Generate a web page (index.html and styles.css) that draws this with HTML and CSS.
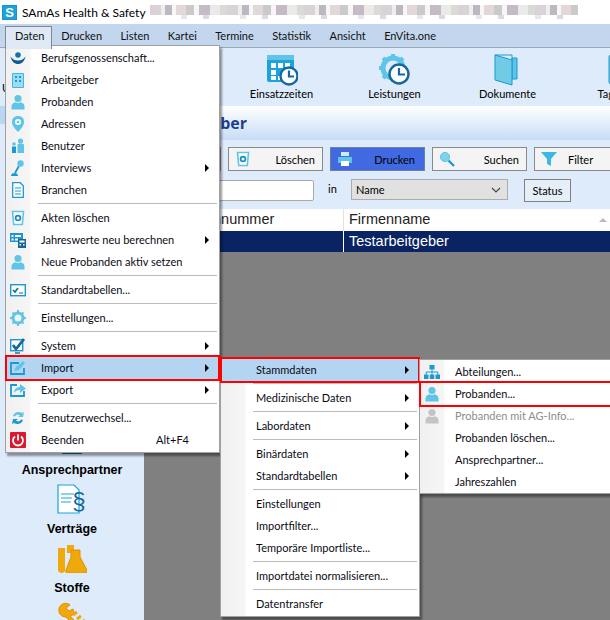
FILE: index.html
```html
<!DOCTYPE html>
<html lang="de">
<head>
  <meta charset="UTF-8">
  <title>SAmAs Health &amp; Safety</title>
  <link rel="stylesheet" href="styles.css">
</head>
<body>

<svg class="defs" width="0" height="0">
  <symbol id="i-person" viewBox="0 0 16 16">
    <circle cx="8" cy="4.500" r="3.600"/>
    <path d="M1.500 15.500v-3c0-2.600 2-3.800 4-4.200 1.400.8 3.600.8 5 0 2 .4 4 1.600 4 4.200v3z"/>
  </symbol>
  <symbol id="i-trash" viewBox="0 0 16 16">
    <path d="M2.500 1.500h11l-1.200 13H3.700z" fill="#fff" stroke="#5ec5e8" stroke-width="1.600"/>
    <circle cx="8" cy="8" r="2.400" fill="none" stroke="#1a8fc4" stroke-width="1.800"/>
  </symbol>
</svg>

<div class="titlebar">
  <span class="app-logo">S</span>
  <span class="app-title">SAmAs Health &amp; Safety</span>
  <span class="blur-strip"></span>
</div>

<nav class="menubar">
  <span class="menubar-item is-open">Daten</span>
  <span class="menubar-item">Drucken</span>
  <span class="menubar-item">Listen</span>
  <span class="menubar-item">Kartei</span>
  <span class="menubar-item">Termine</span>
  <span class="menubar-item">Statistik</span>
  <span class="menubar-item">Ansicht</span>
  <span class="menubar-item">EnVita.one</span>
</nav>

<div class="toolbar">
  <div class="tool tool-first">U</div>
  <div class="tool">
    <svg class="tool-icon" viewBox="0 0 32 32">
      <rect x="1" y="1" width="27" height="27" rx="2" fill="#1ba3dc"/>
      <rect x="1" y="1" width="27" height="5" fill="#5ec5e8"/>
      <path d="M5 9h5v5H5zM12 9h5v5h-5zM19 9h5v5h-5zM5 16h5v5H5zM5 22h5v4H5zM12 22h4v4h-4z" fill="#fff"/>
      <circle cx="23" cy="22" r="8.500" fill="#fff" stroke="#14689c" stroke-width="2.400"/>
      <path d="M23 16.500v6h5" fill="none" stroke="#14689c" stroke-width="2.200"/>
    </svg>
    <span>Einsatzzeiten</span>
  </div>
  <div class="tool">
    <svg class="tool-icon" viewBox="0 0 32 32">
      <circle cx="14" cy="14" r="10" fill="none" stroke="#5ec5e8" stroke-width="5"/>
      <path d="M14 0v6M14 22v6M0 14h6M22 14h6M4 4l4 4M20 20l4 4M24 4l-4 4M8 20l-4 4" stroke="#5ec5e8" stroke-width="4"/>
      <circle cx="20" cy="20" r="9.500" fill="#fff" stroke="#14689c" stroke-width="2.400"/>
      <path d="M20 14v6.500h6" fill="none" stroke="#14689c" stroke-width="2.200"/>
    </svg>
    <span>Leistungen</span>
  </div>
  <div class="tool">
    <svg class="tool-icon" viewBox="0 0 32 32">
      <path d="M20 4h5v21h-5z" fill="#5ec5e8" stroke="#1a9ad0"/>
      <path d="M3 1l17 5v25L3 26z" fill="#6fcbe6" stroke="#1a9ad0"/>
      <path d="M3 1h17v5" fill="none" stroke="#1a9ad0"/>
    </svg>
    <span>Dokumente</span>
  </div>
  <div class="tool">
    <svg class="tool-icon" viewBox="0 0 32 32">
      <rect x="4" y="1" width="24" height="29" rx="2" fill="#6fcbe6" stroke="#1a9ad0"/>
    </svg>
    <span>Tagebuch</span>
  </div>
</div>

<div class="main">
  <aside class="sidebar">
    <div class="side-tab"></div>
    <div class="side-item">
      <svg class="side-icon" viewBox="0 0 30 30">
        <path d="M5 26h20v3H5z" fill="#14689c"/>
      </svg>
      <span class="side-label">Ansprechpartner</span>
    </div>
    <div class="side-item">
      <svg class="side-icon" viewBox="0 0 30 30">
        <path d="M1 1h16l5 5v23H1z" fill="#fff" stroke="#1aa3dd" stroke-width="1.200"/>
        <path d="M4 10h13M4 14h11M4 18h10" stroke="#1aa3dd" stroke-width="1.200"/>
        <text x="22" y="25" class="para-sign">§</text>
      </svg>
      <span class="side-label">Verträge</span>
    </div>
    <div class="side-item">
      <svg class="side-icon" viewBox="0 0 30 30">
        <path d="M1 5h7v22c0 4-7 4-7 0z" fill="#f0a90a"/>
        <path d="M10 2h7v8h-7z" fill="#f0a90a"/>
        <path d="M14 7h9v7l7 13c1 2 0 3-2 3H11c-2 0-3-1-2-3l5-13z" fill="#f0a90a" stroke="#e0900a"/>
      </svg>
      <span class="side-label">Stoffe</span>
    </div>
    <div class="side-item">
      <svg class="side-icon" viewBox="0 0 30 30">
        <path d="M2 6c2-5 8-6 11-3L9 6l3 3 4-2c2 4 0 7-3 7l12 12-3 3L9 15C4 15 1 11 2 6z" fill="#f0a90a" stroke="#e0900a"/>
        <path d="M16 13l4-3M20 17l4-3M24 21l4-3" stroke="#f0a90a" stroke-width="3"/>
      </svg>
    </div>
  </aside>

  <section class="content">
    <h1 class="page-head">Arbeitgeber</h1>
    <div class="actions">
      <button class="act-btn act-hidden"></button>
      <button class="act-btn">
        <svg class="act-icon"><use href="#i-trash"/></svg><span class="act-text">Löschen</span>
      </button>
      <button class="act-btn is-active">
        <svg class="act-icon" viewBox="0 0 16 16">
          <path d="M4 1h8v4H4z" fill="#cdeaf6"/>
          <path d="M1 6h14v6H1z" fill="#5ec5e8"/>
          <path d="M4 10h8v5H4z" fill="#fff"/>
        </svg><span class="act-text">Drucken</span>
      </button>
      <button class="act-btn">
        <svg class="act-icon" viewBox="0 0 16 16">
          <circle cx="6" cy="6" r="4.600" fill="#7fd2ee" stroke="#5ec5e8"/>
          <path d="M9.500 9.500l5.500 5.500" stroke="#1a9ad0" stroke-width="2.400"/>
        </svg><span class="act-text">Suchen</span>
      </button>
      <button class="act-btn act-filter">
        <svg class="act-icon" viewBox="0 0 16 16">
          <path d="M0 1h16l-6 7v7l-4-2V8z" fill="#3db8e4"/>
        </svg><span class="act-text">Filter</span>
      </button>
    </div>
    <div class="filter-row">
      <input class="filter-input" type="text">
      <span class="filter-in">in</span>
      <div class="filter-select">
        <span>Name</span>
        <svg class="chevron" viewBox="0 0 10 6"><path d="M1 1l4 4 4-4" fill="none" stroke="#444" stroke-width="1.100"/></svg>
      </div>
      <button class="status-btn">Status</button>
    </div>
    <div class="grid-row grid-head">
      <div class="cell cell-nr">Firmennummer</div>
      <div class="cell cell-name">Firmenname<span class="sort-mark"></span></div>
    </div>
    <div class="grid-row grid-sel">
      <div class="cell cell-nr"></div>
      <div class="cell cell-name">Testarbeitgeber</div>
    </div>
    <div class="grid-empty"></div>
  </section>
</div>

<!-- Daten menu -->
<div class="menu menu-daten">
  <div class="menu-item">
    <svg class="menu-icon" viewBox="0 0 16 16">
      <circle cx="8" cy="5" r="2.800" fill="#1673a8"/>
      <path d="M.500 6.500c1 5 4 7.500 7.500 7.500s6.500-2.500 7.500-7.500c-2 2.500-4 4-7.500 4S2.500 9 .5 6.500z" fill="#0f5f94"/>
    </svg>
    <span>Berufsgenossenschaft...</span>
  </div>
  <div class="menu-item">
    <svg class="menu-icon" viewBox="0 0 16 16">
      <path d="M2.500 1.500h11v14h-11z" fill="#9bdcf0" stroke="#3db8e4"/>
      <path d="M5 4h2v2H5zM9 4h2v2H9zM5 8h2v2H5zM9 8h2v2H9z" fill="#1a9ad0"/>
    </svg>
    <span>Arbeitgeber</span>
  </div>
  <div class="menu-item">
    <svg class="menu-icon icon-person"><use href="#i-person"/></svg>
    <span>Probanden</span>
  </div>
  <div class="menu-item">
    <svg class="menu-icon" viewBox="0 0 16 16">
      <path d="M8 0c4 0 6 2.500 6 6 0 3.500-3 7-6 10C5 13 2 9.500 2 6c0-3.500 2-6 6-6z" fill="#5ec5e8"/>
      <circle cx="8" cy="6" r="3" fill="#fff"/>
      <circle cx="8" cy="6" r="1.300" fill="#5ec5e8"/>
    </svg>
    <span>Adressen</span>
  </div>
  <div class="menu-item">
    <svg class="menu-icon" viewBox="0 0 16 16">
      <circle cx="4" cy="6" r="1.800" fill="#5ec5e8"/>
      <path d="M2 8.500h4V15H2z" fill="#1a9ad0"/>
      <circle cx="10.500" cy="3" r="2.600" fill="#5ec5e8"/>
      <path d="M7.500 7c0-1 1-1.500 3-1.500s3.500.5 3.500 1.500v8H7.500z" fill="#5ec5e8"/>
    </svg>
    <span>Benutzer</span>
  </div>
  <div class="menu-item has-sub">
    <svg class="menu-icon" viewBox="0 0 16 16">
      <path d="M9 6l-4 7" stroke="#1a9ad0" stroke-width="1.800"/>
      <circle cx="10.500" cy="3.500" r="3.200" fill="#5ec5e8"/>
      <path d="M1 16c0-2 1.500-3 3.500-3s3.500 1 3.500 3z" fill="#1a9ad0"/>
    </svg>
    <span>Interviews</span>
  </div>
  <div class="menu-item">
    <svg class="menu-icon" viewBox="0 0 16 16">
      <path d="M2.700.7h7.500l3.100 3.100v11.500H2.700z" fill="#fff" stroke="#1a9ad0" stroke-width="1.300"/>
      <path d="M5 6h6M5 9h6M5 12h6" stroke="#1a9ad0" stroke-width="1.100"/>
    </svg>
    <span>Branchen</span>
  </div>
  <div class="menu-sep"></div>
  <div class="menu-item">
    <svg class="menu-icon"><use href="#i-trash"/></svg>
    <span>Akten löschen</span>
  </div>
  <div class="menu-item has-sub">
    <svg class="menu-icon" viewBox="0 0 16 16">
      <path d="M0 1h13v9H0z" fill="#1a9ad0"/>
      <path d="M1.500 3h2v2h-2zM5 3h6v2H5zM1.500 6.500h2v2h-2zM5 6.500h3v2H5z" fill="#fff"/>
      <path d="M8 7h8v9H8z" fill="#14689c"/>
      <path d="M9.500 8.500h5v2h-5zM9.500 12H11v1.500H9.500zM13 12h1.500v1.500H13z" fill="#fff"/>
    </svg>
    <span>Jahreswerte neu berechnen</span>
  </div>
  <div class="menu-item">
    <svg class="menu-icon icon-person"><use href="#i-person"/></svg>
    <span>Neue Probanden aktiv setzen</span>
  </div>
  <div class="menu-sep"></div>
  <div class="menu-item">
    <svg class="menu-icon" viewBox="0 0 16 16">
      <rect x=".7" y="2.700" width="14.600" height="11" fill="#fff" stroke="#1a9ad0" stroke-width="1.400"/>
      <path d="M3 8l2 2 3-4" fill="none" stroke="#14689c" stroke-width="1.600"/>
      <path d="M9 11h4" stroke="#14689c"/>
    </svg>
    <span>Standardtabellen...</span>
  </div>
  <div class="menu-sep"></div>
  <div class="menu-item">
    <svg class="menu-icon" viewBox="0 0 16 16">
      <circle cx="8" cy="8" r="5" fill="none" stroke="#5ec5e8" stroke-width="3"/>
      <path d="M8 0v3M8 13v3M0 8h3M13 8h3M2.500 2.500l2 2M11.500 11.500l2 2M13.500 2.500l-2 2M4.500 11.500l-2 2" stroke="#5ec5e8" stroke-width="2"/>
    </svg>
    <span>Einstellungen...</span>
  </div>
  <div class="menu-sep"></div>
  <div class="menu-item has-sub">
    <svg class="menu-icon" viewBox="0 0 16 16">
      <rect x=".7" y="1.700" width="12" height="11" fill="#fff" stroke="#1a9ad0" stroke-width="1.400"/>
      <path d="M3 7l3 4 8-10" fill="none" stroke="#14689c" stroke-width="2.800"/>
      <path d="M5 15h5" stroke="#14689c" stroke-width="1.400"/>
    </svg>
    <span>System</span>
  </div>
  <div class="menu-item has-sub is-hot is-marked">
    <svg class="menu-icon" viewBox="0 0 16 16">
      <path d="M9 3H1v11h13V8" fill="none" stroke="#1a9ad0" stroke-width="1.800"/>
      <path d="M4 11l2-4 7-6 2 2-6 7z" fill="#5ec5e8"/>
    </svg>
    <span>Import</span>
  </div>
  <div class="menu-item has-sub">
    <svg class="menu-icon" viewBox="0 0 16 16">
      <path d="M7 3H1v11h13V9" fill="none" stroke="#1a9ad0" stroke-width="1.800"/>
      <path d="M4 11c0-4 3-6 6-6V2l6 4.500L10 11V8c-3 0-5 1-6 3z" fill="#5ec5e8"/>
    </svg>
    <span>Export</span>
  </div>
  <div class="menu-sep"></div>
  <div class="menu-item">
    <svg class="menu-icon" viewBox="0 0 16 16">
      <path d="M3 6c1-4 6-5 9-3l2-1-1 5H8l2-1.500C8 4 6 4.500 5 6.500z" fill="#5ec5e8"/>
      <path d="M13 10c-1 4-6 5-9 3l-2 1 1-5h5l-2 1.500c2 1.500 4 1 5-1z" fill="#1a9ad0"/>
    </svg>
    <span>Benutzerwechsel...</span>
  </div>
  <div class="menu-item">
    <svg class="menu-icon" viewBox="0 0 16 16">
      <rect width="16" height="16" rx="1" fill="#d8192f"/>
      <path d="M5 4.500a5 5 0 1 0 6 0" fill="none" stroke="#fff" stroke-width="1.800"/>
      <path d="M8 2.500v6" stroke="#fff" stroke-width="1.800"/>
    </svg>
    <span>Beenden</span>
    <span class="menu-key">Alt+F4</span>
  </div>
</div>

<!-- Import submenu -->
<div class="menu menu-import">
  <div class="menu-item has-sub is-hot is-marked"><span>Stammdaten</span></div>
  <div class="menu-sep"></div>
  <div class="menu-item has-sub"><span>Medizinische Daten</span></div>
  <div class="menu-sep"></div>
  <div class="menu-item has-sub"><span>Labordaten</span></div>
  <div class="menu-sep"></div>
  <div class="menu-item has-sub"><span>Binärdaten</span></div>
  <div class="menu-item has-sub"><span>Standardtabellen</span></div>
  <div class="menu-sep"></div>
  <div class="menu-item"><span>Einstellungen</span></div>
  <div class="menu-item"><span>Importfilter...</span></div>
  <div class="menu-item"><span>Temporäre Importliste...</span></div>
  <div class="menu-sep"></div>
  <div class="menu-item"><span>Importdatei normalisieren...</span></div>
  <div class="menu-sep"></div>
  <div class="menu-item"><span>Datentransfer</span></div>
</div>

<!-- Stammdaten submenu -->
<div class="menu menu-stamm">
  <div class="menu-item">
    <svg class="menu-icon" viewBox="0 0 16 16">
      <path d="M5.500 1h5v4.500h-5zM0 10.500h4.500V15H0zM5.750 10.500h4.500V15h-4.500zM11.500 10.500H16V15h-4.500z" fill="#1a9ad0"/>
      <path d="M8 5.500v5M2.200 10.500V8h11.600v2.500" fill="none" stroke="#1a9ad0"/>
    </svg>
    <span>Abteilungen...</span>
  </div>
  <div class="menu-item is-marked">
    <svg class="menu-icon icon-person"><use href="#i-person"/></svg>
    <span>Probanden...</span>
  </div>
  <div class="menu-item is-disabled">
    <svg class="menu-icon icon-person-off"><use href="#i-person"/></svg>
    <span>Probanden mit AG-Info...</span>
  </div>
  <div class="menu-item"><span>Probanden löschen...</span></div>
  <div class="menu-item"><span>Ansprechpartner...</span></div>
  <div class="menu-item"><span>Jahreszahlen</span></div>
</div>

</body>
</html>
```
FILE: styles.css
```css
* {
  box-sizing: border-box;
}

html, body {
  margin: 0;
  height: 620px;
  overflow: hidden;
}

body {
  position: relative;
  width: 610px;
  background: #fff;
  font-family: Lato, "Noto Sans", sans-serif;
  font-size: 11px;
  color: #000;
}

.defs {
  position: absolute;
}

/* title bar */
.titlebar {
  display: flex;
  align-items: center;
  height: 24px;
  padding-left: 2px;
  background: #fff;
}

.app-logo {
  width: 15px;
  height: 15px;
  border: 1px solid #1592cf;
  background: #1ba3dc;
  color: #fff;
  font: bold 13px/13px "Liberation Sans", sans-serif;
  text-align: center;
}

.app-title {
  margin-left: 5px;
  font-size: 12px;
}

.blur-strip {
  width: 428px;
  height: 14px;
  margin-left: 4px;
  filter: blur(0.6px);
  opacity: 0.7;
  background-image:
    repeating-linear-gradient(90deg, #c9bfc5 0 11px, #e8e8e4 11px 15px, #a09aa7 15px 22px, #f4f4f4 22px 26px, #d6c8c8 26px 36px, #b5b5b5 36px 44px, #f4f2f2 44px 49px, #ac9faf 49px 60px, #e4e0e0 60px 70px, #ccccc4 70px 77px),
    repeating-linear-gradient(90deg, #fff 0 31px, #ddd 31px 37px, #fff 37px 53px, #ccc 53px 59px);
  background-size: 100% 10px, 100% 14px;
  background-repeat: no-repeat;
}

/* menu bar */
.menubar {
  display: flex;
  height: 24px;
  padding: 2px 0 0 5px;
  background: #c2d7ee;
  border-bottom: 1px solid #9da8b5;
}

.menubar-item {
  padding: 3px 9.200px 0;
  color: #111;
  white-space: nowrap;
}

.menubar-item.is-open {
  width: 47px;
  height: 23px;
  padding: 2px 9px 0;
  position: relative;
  z-index: 3;
  background: #dfe9f5;
  border: 1px solid #808890;
  border-bottom: none;
}

/* toolbar */
.toolbar {
  display: flex;
  height: 58px;
  background: #deebfb;
  overflow: hidden;
}

.tool {
  flex: none;
  width: 113px;
  padding-top: 6px;
  text-align: center;
  white-space: nowrap;
}

.tool span {
  display: block;
  margin-top: 1px;
}

.tool-first {
  width: 225px;
  padding: 33px 0 0 2px;
  text-align: left;
}

.tool-icon {
  display: block;
  width: 32px;
  height: 32px;
  margin: 0 auto;
}

/* left column and content */
.main {
  display: flex;
  height: 514px;
}

.sidebar {
  flex: none;
  width: 144px;
  background: #deebfb;
  text-align: center;
  overflow: hidden;
}

.side-tab {
  width: 6px;
  height: 18px;
  margin-bottom: 301px;
  background: #b9d6f2;
}

.side-item {
  height: 59px;
}

.side-icon {
  display: block;
  width: 30px;
  height: 30px;
  margin: 0 auto 7px;
}

.side-label {
  font-family: "Liberation Sans", sans-serif;
  font-weight: bold;
  font-size: 12.500px;
  line-height: 17px;
}

.para-sign {
  font: 24px "Liberation Sans", sans-serif;
  fill: #14689c;
  text-anchor: middle;
}

.content {
  flex: 1;
  min-width: 0;
  display: flex;
  flex-direction: column;
  background: #deebfb;
}

.page-head {
  height: 34px;
  margin: 0;
  padding: 6px 0 0 8px;
  background: linear-gradient(#fff, #c6dcf6);
  color: #1e3f8f;
  font-family: "Open Sans", sans-serif;
  font-size: 16px;
  line-height: 22px;
}

/* action buttons */
.actions {
  display: flex;
  gap: 7px;
  height: 24px;
  margin-top: 7px;
  overflow: hidden;
}

.act-btn {
  flex: none;
  display: flex;
  align-items: center;
  width: 95px;
  height: 24px;
  padding: 0 7px 0 6px;
  background: #f4f4f4;
  border: 1px solid #8a8a8a;
  font: inherit;
  color: #000;
}

.act-hidden {
  width: 77px;
}

.act-btn.is-active {
  padding-right: 9px;
  background: #4169e1;
  border-color: #6f7f9c;
}

.act-filter {
  width: 84px;
}

.act-icon {
  flex: none;
  width: 16px;
  height: 16px;
}

.act-text {
  flex: 1;
  text-align: right;
}

.act-filter .act-text {
  text-align: left;
  padding-left: 11px;
}

/* search row */
.filter-row {
  display: flex;
  align-items: flex-start;
  height: 24px;
  margin-top: 8px;
}

.filter-input {
  width: 170px;
  height: 21px;
  margin: 1px 0 0;
  border: 1px solid #aaa;
  border-radius: 2px;
  background: #fff;
}

.filter-in {
  margin: 3px 0 0 14px;
  width: 23px;
}

.filter-select {
  display: flex;
  align-items: center;
  justify-content: space-between;
  width: 157px;
  height: 21px;
  padding: 0 4px;
  background: #e1e1e1;
  border: 1px solid #adadad;
}

.chevron {
  width: 10px;
  height: 6px;
  margin-right: 2px;
}

.status-btn {
  width: 47px;
  height: 23px;
  margin-left: 16px;
  padding: 0;
  background: #e6eef8;
  border: 1px solid #808080;
  font: inherit;
  color: #000;
}

/* grid */
.grid-row {
  display: flex;
  font-family: "Liberation Sans", sans-serif;
  font-size: 14.500px;
}

.grid-head {
  height: 22px;
  margin-top: 6px;
  background: #fff;
  color: #222;
  line-height: 21px;
}

.grid-sel {
  height: 21px;
  background: #0a2463;
  color: #fff;
  line-height: 20px;
}

.cell {
  white-space: nowrap;
}

.cell-nr {
  flex: none;
  width: 200px;
  padding-left: 32px;
  border-right: 1px solid #fff;
}

.grid-head .cell-nr {
  border-right-color: #e2e2e2;
}

.cell-name {
  flex: 1;
  position: relative;
  padding-left: 5px;
}

.sort-mark {
  position: absolute;
  right: 3px;
  top: 9px;
  border: 4px solid transparent;
  border-top: none;
  border-bottom: 4px solid #bbb;
}

.grid-empty {
  flex: 1;
  background: #808080;
}

/* popup menus */
.menu {
  position: absolute;
  z-index: 2;
  padding: 1px;
  background: linear-gradient(90deg, #f0f0f0, #f6f6f6 24px, #fff 25px);
  border: 1px solid #a0a0a0;
  box-shadow: 2px 3px 2px rgba(0, 0, 0, 0.4);
  color: #0a0a14;
}

.menu-daten {
  left: 5px;
  top: 45px;
  width: 215px;
  height: 408px;
}

.menu-import {
  left: 220px;
  top: 357px;
  width: 200px;
  height: 260px;
}

.menu-stamm {
  left: 419px;
  top: 359px;
  width: 200px;
  height: 135px;
}

.menu-item {
  position: relative;
  display: flex;
  align-items: center;
  height: 22px;
  padding: 0 0 2px 34px;
  white-space: nowrap;
}

.menu-icon {
  position: absolute;
  left: 3px;
  top: 3px;
  width: 16px;
  height: 16px;
}

.icon-person {
  fill: #5ec5e8;
}

.icon-person-off {
  fill: #c4c4c4;
}

.menu-sep {
  height: 1px;
  margin: 2px 1px 3px 31px;
  background: #bcbcbc;
}

.has-sub::after {
  content: "";
  position: absolute;
  right: 9px;
  top: 7px;
  border-left: 4px solid #000;
  border-top: 4px solid transparent;
  border-bottom: 4px solid transparent;
}

.menu-key {
  margin-left: auto;
  margin-right: 29px;
}

.is-hot {
  background: #b4d5f2;
}

.is-marked {
  z-index: 1;
  outline: 2px solid #f00;
  outline-offset: 0;
}

.is-disabled {
  color: #8d8d8d;
}
```
